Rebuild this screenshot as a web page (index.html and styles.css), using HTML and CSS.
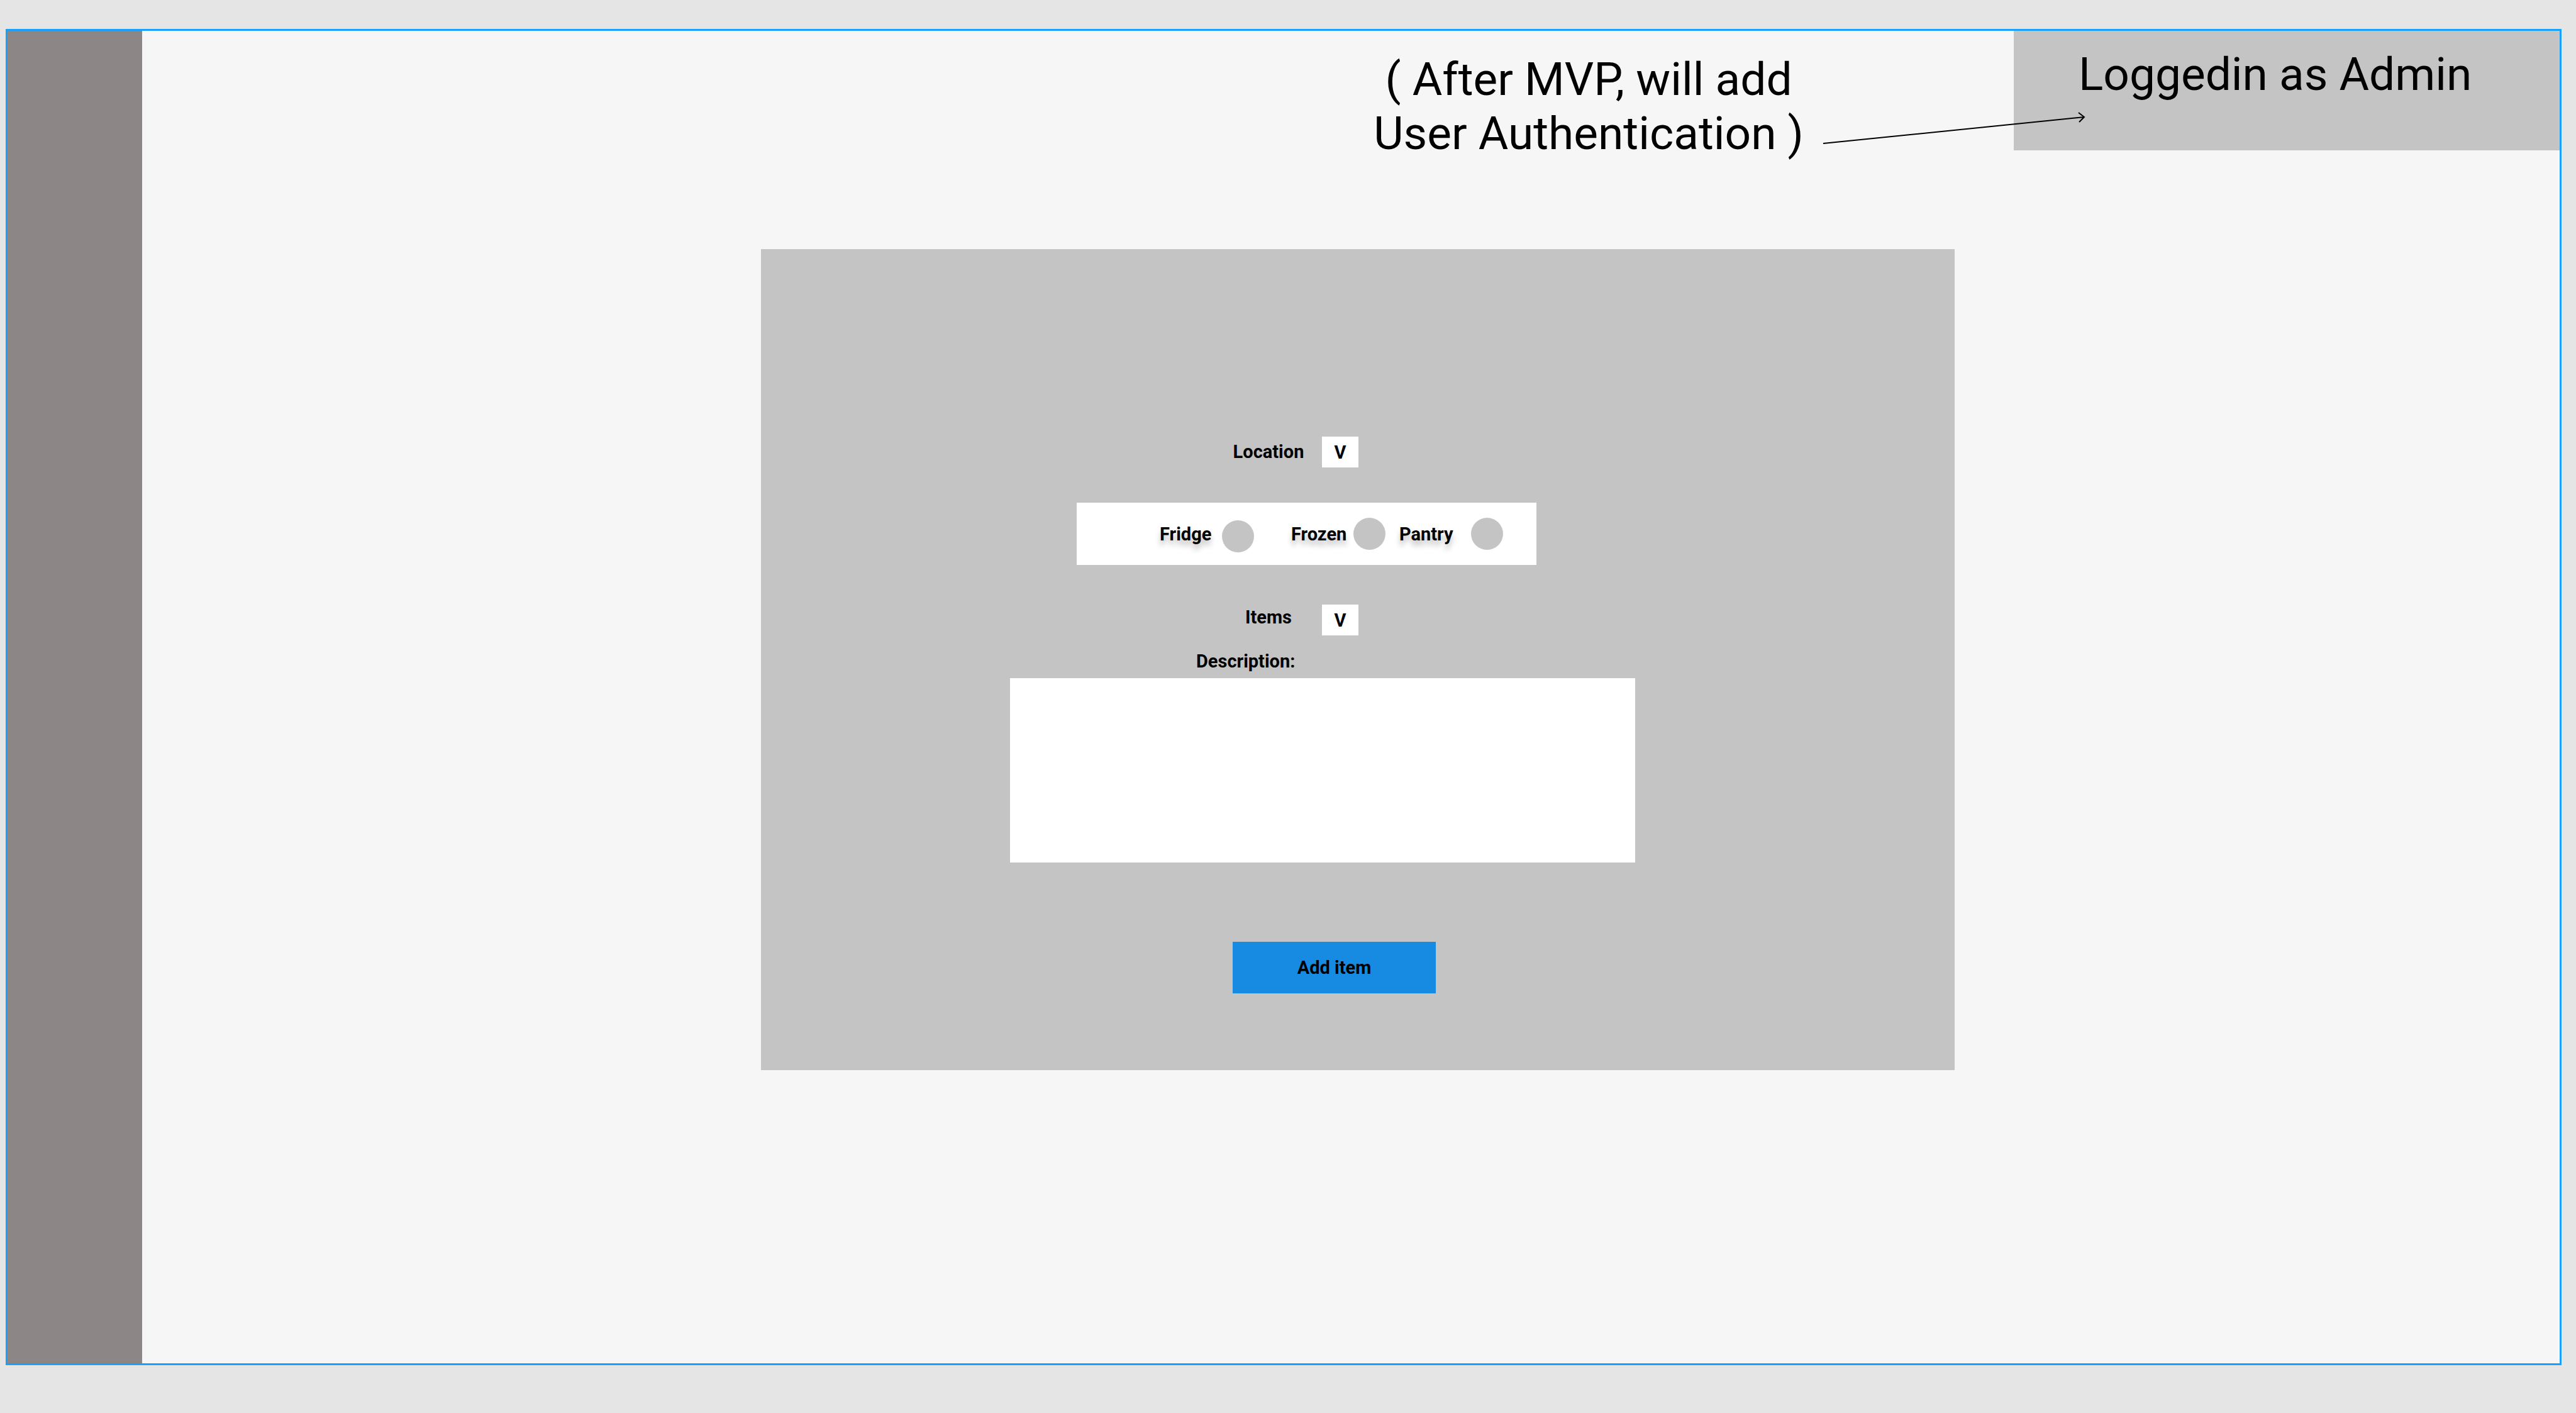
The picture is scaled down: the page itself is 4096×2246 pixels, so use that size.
FILE: index.html
```html
<!DOCTYPE html>
<html lang="en">
<head>
  <meta charset="utf-8">
  <title>Add item</title>
  <link rel="stylesheet" href="styles.css">
</head>
<body>
  <div class="frame">
    <aside class="sidebar"></aside>
    <div class="content">
      <header class="topbar">
        <p class="note">( After MVP, will add<br>User Authentication )</p>
        <div class="account">Loggedin as Admin</div>
        <svg class="arrow" viewBox="0 0 424 60" aria-hidden="true">
          <path d="M4 54L419 12M410 5L419 12L411 20"/>
        </svg>
      </header>
      <main class="stage">
        <form class="panel">
          <div class="field">
            <label class="field-label" for="location">Location</label>
            <select class="picker" id="location"><option>V</option></select>
          </div>
          <div class="places" role="radiogroup" aria-label="Location">
            <label class="place place-low">Fridge <input class="radio" type="radio" name="place"></label>
            <label class="place">Frozen <input class="radio" type="radio" name="place"></label>
            <label class="place place-wide">Pantry <input class="radio" type="radio" name="place"></label>
          </div>
          <div class="field">
            <label class="field-label field-label-short" for="items">Items</label>
            <select class="picker" id="items"><option>V</option></select>
          </div>
          <label class="description-label" for="description">Description:</label>
          <textarea class="description" id="description"></textarea>
          <button class="submit" type="button">Add item</button>
        </form>
      </main>
    </div>
  </div>
</body>
</html>
```
FILE: styles.css
```css
* {
  box-sizing: border-box;
}

body {
  display: flex;
  min-height: 100vh;
  margin: 0;
  padding: 46px 23px 76px 9px;
  background: #e5e5e5;
  color: #000;
  font: 700 29px/34px Roboto, sans-serif;
}

.frame {
  display: flex;
  flex: 1;
  border: 3px solid #18a0fb;
  background: #f6f6f6;
}

.sidebar {
  flex: none;
  width: 214px;
  background: #8d8686;
}

.content {
  flex: 1;
}

/* Top bar */

.topbar {
  position: relative;
  display: flex;
  align-items: flex-start;
  justify-content: flex-end;
  font-size: 73px;
  font-weight: 400;
  line-height: 86px;
}

.note {
  margin: 0 334px 0 0;
  padding-top: 34px;
  text-align: center;
}

.account {
  width: 868px;
  height: 190px;
  padding: 26px 0 0 103px;
  background: #c4c4c4;
}

.arrow {
  position: absolute;
  top: 125px;
  right: 751px;
  width: 424px;
  height: 60px;
  fill: none;
  stroke: #000;
  stroke-width: 2;
}

/* Form */

.stage {
  display: grid;
  grid-template-columns: 984fr 1898fr 962fr;
  padding-top: 141px;
}

.panel {
  display: flex;
  flex-direction: column;
  align-items: flex-start;
  grid-column: 2;
  padding: 298px 508px 122px 396px;
  background: #c4c4c4;
}

.field {
  display: flex;
  gap: 28px;
  padding-left: 354px;
}

.field-label {
  width: 114px;
  line-height: 49px;
  text-align: center;
}

.field-label-short {
  line-height: 41px;
}

.picker {
  width: 58px;
  height: 49px;
  padding: 0;
  border: 0;
  border-radius: 0;
  appearance: none;
  background: #fff;
  color: #000;
  font: inherit;
  text-align: center;
  text-align-last: center;
}

.places {
  display: grid;
  grid-template-columns: 209px 172px 165px;
  align-items: center;
  width: 731px;
  height: 99px;
  margin: 56px 0 63px 106px;
  padding-left: 132px;
  background: #fff;
  text-shadow: 0 8px 8px rgba(0, 0, 0, 0.25);
}

.place {
  display: flex;
  align-items: center;
  justify-content: space-between;
  width: 150px;
}

.place-wide {
  width: 165px;
}

.radio {
  width: 51px;
  height: 51px;
  margin: 0;
  border-radius: 50%;
  appearance: none;
  background: #c4c4c4;
}

.place-low .radio {
  margin-top: 8px;
}

.description-label {
  margin: 24px 0 10px 296px;
}

.description {
  width: 100%;
  height: 293px;
  padding: 16px;
  border: 0;
  resize: none;
  background: #fff;
  color: #000;
  font: inherit;
}

.submit {
  width: 323px;
  height: 82px;
  margin: 126px 0 0 354px;
  padding: 0;
  border: 0;
  background: #178ae2;
  color: #000;
  font: inherit;
}
```
